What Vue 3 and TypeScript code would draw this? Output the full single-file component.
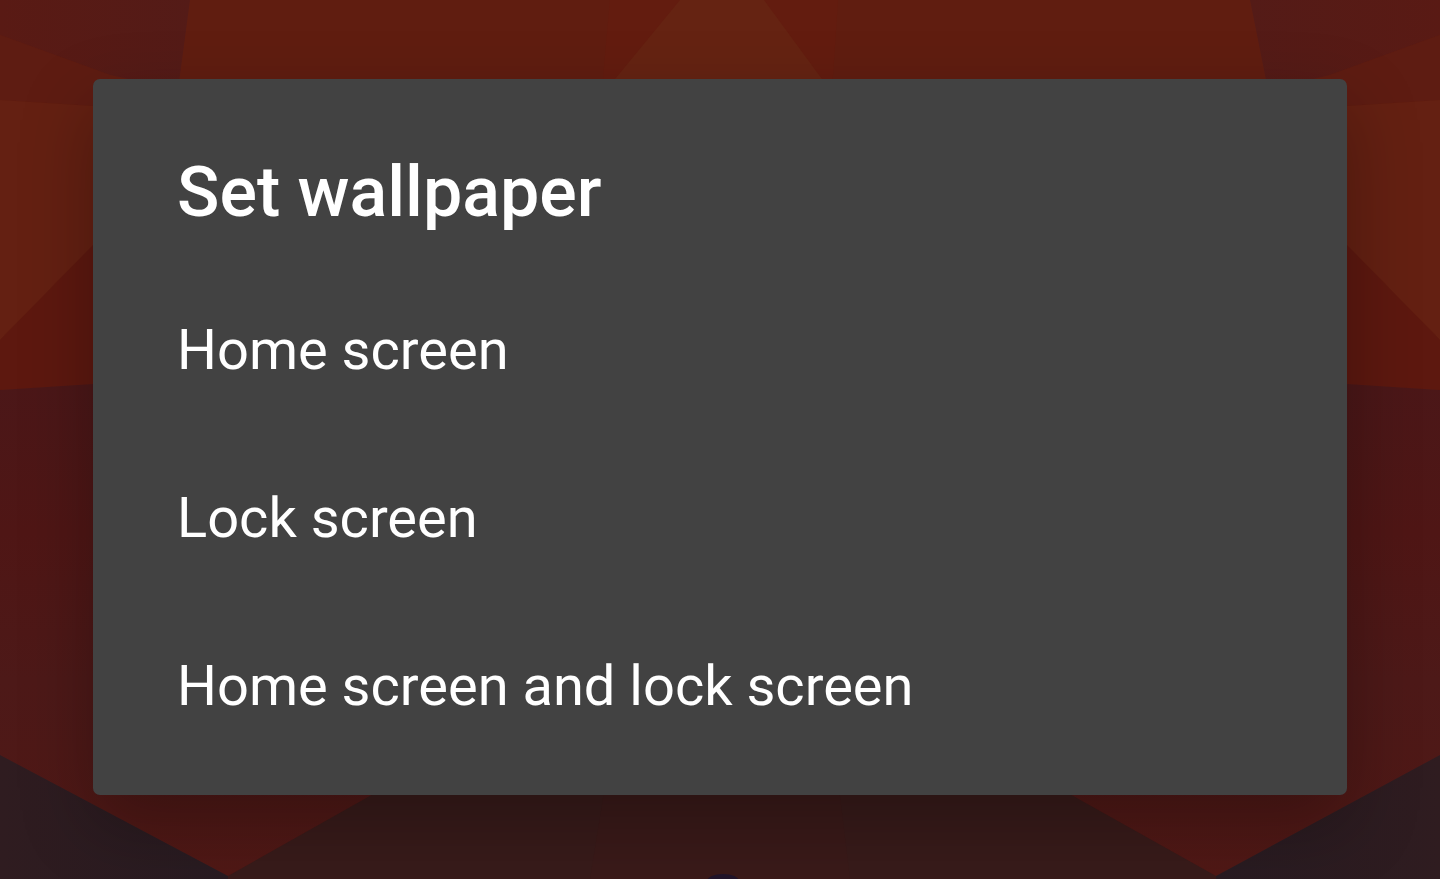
<script setup lang="ts">
import { ref } from 'vue'

interface Target {
  id: string
  label: string
}

interface Facet {
  points: string
  fill: string
}

const targets: Target[] = [
  { id: 'home', label: 'Home screen' },
  { id: 'lock', label: 'Lock screen' },
  { id: 'both', label: 'Home screen and lock screen' },
]

const chosen = ref<string | null>(null)

const facets: Facet[] = [
  { points: '0,0 190,0 178,90 110,75 0,35', fill: 'url(#plum-left)' },
  { points: '1440,0 1250,0 1268,90 1330,75 1440,35', fill: 'url(#plum-right)' },
  { points: '0,35 110,75 93,106 0,100', fill: '#5e1c12' },
  { points: '1440,35 1330,75 1347,106 1440,100', fill: '#5e1c12' },
  { points: '0,100 93,106 93,245 0,340', fill: '#642012' },
  { points: '1440,100 1347,106 1347,245 1440,340', fill: '#642012' },
  { points: '0,340 100,238 100,384 0,390', fill: '#5d180f' },
  { points: '1440,340 1340,238 1340,384 1440,390', fill: '#5d180f' },
  { points: '610,0 838,0 832,90 602,90', fill: '#631c0f' },
  { points: '680,0 764,0 830,90 606,90', fill: '#652312' },
  { points: '0,390 93,384 1347,384 1440,390 1440,879 0,879', fill: 'url(#maroon)' },
  { points: '228,876 368,797 720,600 1075,797 1216,876 1216,879 228,879', fill: '#381b1a' },
  { points: '606,780 838,780 850,879 590,879', fill: '#3a1a19' },
  { points: '0,755 228,876 228,879 0,879', fill: 'url(#night-left)' },
  { points: '1440,755 1216,876 1216,879 1440,879', fill: 'url(#night-right)' },
]
</script>

<template>
  <main class="screen">
    <svg class="wallpaper" viewBox="0 0 1440 879" preserveAspectRatio="none" aria-hidden="true">
      <defs>
        <linearGradient id="plum-left">
          <stop offset="0" stop-color="#591a14" />
          <stop offset="1" stop-color="#541b17" />
        </linearGradient>
        <linearGradient id="plum-right">
          <stop offset="0" stop-color="#541b17" />
          <stop offset="1" stop-color="#591a14" />
        </linearGradient>
        <linearGradient id="maroon" x1="0" y1="0" x2="0" y2="1">
          <stop offset="0" stop-color="#4b1718" />
          <stop offset="0.3" stop-color="#4f1615" />
          <stop offset="0.6" stop-color="#4d1918" />
          <stop offset="1" stop-color="#501815" />
        </linearGradient>
        <linearGradient id="night-left">
          <stop offset="0" stop-color="#2f1c20" />
          <stop offset="1" stop-color="#281b21" />
        </linearGradient>
        <linearGradient id="night-right">
          <stop offset="0" stop-color="#281b21" />
          <stop offset="1" stop-color="#2f1c20" />
        </linearGradient>
      </defs>
      <rect width="1440" height="879" fill="#601d10" />
      <polygon v-for="facet in facets" :key="facet.points" :points="facet.points" :fill="facet.fill" />
      <ellipse cx="723" cy="881" rx="16" ry="7" fill="#21152a" />
    </svg>

    <section class="dialog" role="dialog" aria-labelledby="dialog-title">
      <h1 id="dialog-title" class="title">Set wallpaper</h1>
      <ul class="options">
        <li v-for="target in targets" :key="target.id">
          <button type="button" class="option" @click="chosen = target.id">{{ target.label }}</button>
        </li>
      </ul>
    </section>
  </main>
</template>

<style>
body {
  margin: 0;
  background: #601d10;
}
</style>

<style scoped>
.screen {
  position: relative;
  display: flex;
  align-items: center;
  box-sizing: border-box;
  min-height: 100vh;
  padding: 79px 93px 84px;
  overflow: hidden;
  font-family: Roboto, sans-serif;
  color: #fff;
}

.wallpaper {
  position: absolute;
  inset: 0;
  width: 100%;
  height: 100%;
}

.dialog {
  position: relative;
  flex: 1;
  box-sizing: border-box;
  padding: 71px 0 25px;
  border-radius: 7px;
  background: #424242;
  box-shadow: 0 28px 72px rgba(0, 0, 0, 0.28);
}

.title {
  margin: 0;
  padding: 0 84px 32px;
  font-size: 70px;
  font-weight: 500;
  line-height: 84px;
}

.options {
  margin: 0;
  padding: 0;
  list-style: none;
}

.option {
  display: block;
  width: 100%;
  padding: 52px 84px;
  border: 0;
  background: none;
  color: inherit;
  font: inherit;
  font-size: 56px;
  line-height: 64px;
  text-align: left;
  cursor: pointer;
}
</style>
